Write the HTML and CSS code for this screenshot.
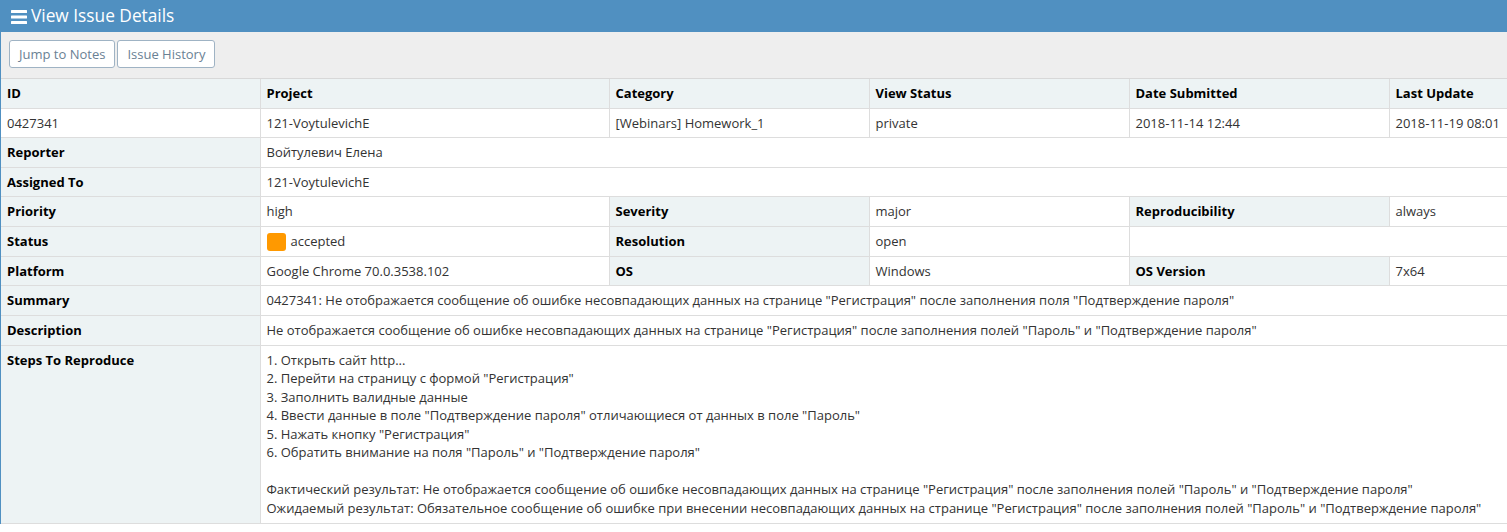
FILE: index.html
```html
<!DOCTYPE html>
<html>
<head>
<meta charset="utf-8">
<link rel="stylesheet" href="styles.css">
</head>
<body>
<div class="widget">
  <div class="widget-header">
    <svg class="bars" width="16" height="14" viewBox="0 0 16 14"><rect x="0" y="0" width="16" height="3" rx="0.5" fill="#fff"/><rect x="0" y="5.5" width="16" height="3" rx="0.5" fill="#fff"/><rect x="0" y="11" width="16" height="3" rx="0.5" fill="#fff"/></svg>
    <h4 class="widget-title">View Issue Details</h4>
  </div>
  <div class="widget-body">
    <div class="toolbox">
      <a class="btn">Jump to Notes</a>
      <a class="btn">Issue History</a>
    </div>
    <table class="details">
      <colgroup>
        <col class="c1"><col class="c2"><col class="c3"><col class="c4"><col class="c5"><col class="c6">
      </colgroup>
      <tr class="cat-row">
        <th>ID</th><th>Project</th><th>Category</th><th>View Status</th><th>Date Submitted</th><th>Last Update</th>
      </tr>
      <tr>
        <td>0427341</td><td>121-VoytulevichE</td><td>[Webinars] Homework_1</td><td>private</td><td>2018-11-14 12:44</td><td>2018-11-19 08:01</td>
      </tr>
      <tr>
        <th class="cat">Reporter</th><td colspan="5">Войтулевич Елена</td>
      </tr>
      <tr>
        <th class="cat">Assigned To</th><td colspan="5">121-VoytulevichE</td>
      </tr>
      <tr>
        <th class="cat">Priority</th><td>high</td><th class="cat">Severity</th><td>major</td><th class="cat">Reproducibility</th><td>always</td>
      </tr>
      <tr>
        <th class="cat">Status</th><td><span class="status-box"></span>accepted</td><th class="cat">Resolution</th><td>open</td><td colspan="2"></td>
      </tr>
      <tr>
        <th class="cat">Platform</th><td>Google Chrome 70.0.3538.102</td><th class="cat">OS</th><td>Windows</td><th class="cat">OS Version</th><td>7x64</td>
      </tr>
      <tr>
        <th class="cat">Summary</th><td colspan="5">0427341: Не отображается сообщение об ошибке несовпадающих данных на странице "Регистрация" после заполнения поля "Подтверждение пароля"</td>
      </tr>
      <tr>
        <th class="cat">Description</th><td colspan="5">Не отображается сообщение об ошибке несовпадающих данных на странице "Регистрация" после заполнения полей "Пароль" и "Подтверждение пароля"</td>
      </tr>
      <tr>
        <th class="cat top">Steps To Reproduce</th>
        <td colspan="5" class="steps">1. Открыть сайт http...<br>2. Перейти на страницу с формой "Регистрация"<br>3. Заполнить валидные данные<br>4. Ввести данные в поле "Подтверждение пароля" отличающиеся от данных в поле "Пароль"<br>5. Нажать кнопку "Регистрация"<br>6. Обратить внимание на поля "Пароль" и "Подтверждение пароля"<br><br>Фактический результат: Не отображается сообщение об ошибке несовпадающих данных на странице "Регистрация" после заполнения полей "Пароль" и "Подтверждение пароля"<br>Ожидаемый результат: Обязательное сообщение об ошибке при внесении несовпадающих данных на странице "Регистрация" после заполнения полей "Пароль" и "Подтверждение пароля"</td>
      </tr>
    </table>
  </div>
</div>
</body>
</html>
```

FILE: styles.css
```css
html, body {
  margin: 0;
  padding: 0;
  background: #fff;
}
body {
  font-family: "Open Sans", "Liberation Sans", sans-serif;
  font-size: 13px;
  line-height: 1.42857;
  color: #393939;
}
.widget {
  width: 100%;
}
.widget-header {
  background: #5090c1;
  height: 32px;
  display: flex;
  align-items: center;
  padding-left: 11px;
  box-sizing: border-box;
  color: #fff;
}
.bars {
  display: block;
  margin-right: 4px;
  margin-top: 1px;
}
.widget-title {
  margin: 0;
  font-size: 17.3px;
  font-weight: 400;
  line-height: 32px;
  color: #fff;
}
.widget-body {
  border-left: 1px solid #5090c1;
}
.toolbox {
  background: #eeeeee;
  padding: 8px 8px 10px;
  border-bottom: 1px solid #d8d8d8;
  display: flex;
  gap: 2px;
}
.btn {
  display: inline-block;
  box-sizing: border-box;
  height: 28px;
  line-height: 26px;
  padding: 0 9px;
  background: #fff;
  border: 1px solid #9fb3c4;
  border-radius: 3px;
  color: #6a8194;
  font-size: 13px;
  cursor: pointer;
}
.details {
  border-collapse: collapse;
  table-layout: fixed;
  width: 100%;
}
.c1 { width: 259px; }
.c2 { width: 349px; }
.c3 { width: 260px; }
.c4 { width: 260px; }
.c5 { width: 260px; }
.details th, .details td {
  border: 1px solid #dddddd;
  padding: 5px 6px;
  text-align: left;
  vertical-align: top;
  font-size: 13px;
  line-height: 1.42857;
  white-space: nowrap;
  overflow: hidden;
}
.details tr:first-child th {
  border-top: 0;
}
.details tr > :first-child {
  border-left: 0;
}
.details tr > :last-child {
  border-right: 0;
}
.details th {
  background: #edf3f4;
  font-weight: 700;
  color: #000;
}
.details td {
  background: #fff;
  color: #333;
}
.status-box {
  display: inline-block;
  width: 19px;
  height: 18px;
  background: #ff9900;
  border-radius: 3px;
  vertical-align: -5px;
  margin-right: 5px;
}
```
